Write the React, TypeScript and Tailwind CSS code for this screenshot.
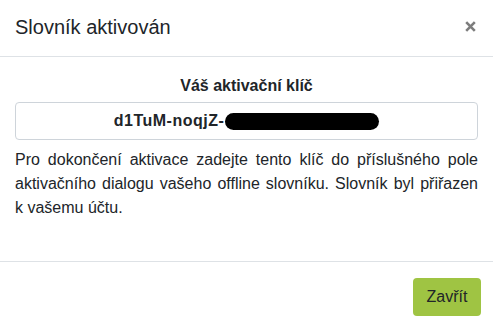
export default function App() {
  return (
    <div className="min-h-[330px] w-full bg-white text-[#212529] font-['Liberation_Sans',Arial,sans-serif]">
      {/* hlavička */}
      <div className="flex h-[57px] items-start justify-between border-b border-[#dee2e6] px-[15px] pt-[12px]">
        <h5 className="text-[20px] leading-[30px]">Slovník aktivován</h5>
        <button type="button" className="mt-[8px] mr-[1px] flex h-[13px] w-[13px] items-center justify-center">
          <svg width="11" height="11" viewBox="0 0 11 11">
            <path d="M1.2 1.2 L9.8 9.8 M9.8 1.2 L1.2 9.8" stroke="#7d7d7d" strokeWidth="2.6" strokeLinecap="butt" />
          </svg>
        </button>
      </div>

      {/* tělo */}
      <div className="px-[15px] pt-[17px] pb-[41px]">
        <div className="mb-1 text-center text-[16px] leading-6 font-bold">Váš aktivační klíč</div>
        <div className="flex h-[38px] items-center justify-center rounded-[4px] border border-[#ced4da] text-[16px] font-bold">
          <span className="tracking-[0.5px]">d1TuM-noqjZ-</span>
          <span className="ml-[1px] inline-block h-[17px] w-[154px] rounded-full bg-black" />
        </div>
        <p className="mt-[8px] text-justify text-[16px] leading-6">
          Pro dokončení aktivace zadejte tento klíč do příslušného pole aktivačního dialogu vašeho offline slovníku. Slovník byl přiřazen k vašemu účtu.
        </p>
      </div>

      {/* patička */}
      <div className="flex justify-end border-t border-[#dee2e6] pt-4 pr-[12px] pb-[14px]">
        <button
          type="button"
          className="h-[38px] w-[68px] rounded-[4px] bg-[#9fc443] text-[16px] text-[#212529]"
        >
          Zavřít
        </button>
      </div>
    </div>
  );
}
